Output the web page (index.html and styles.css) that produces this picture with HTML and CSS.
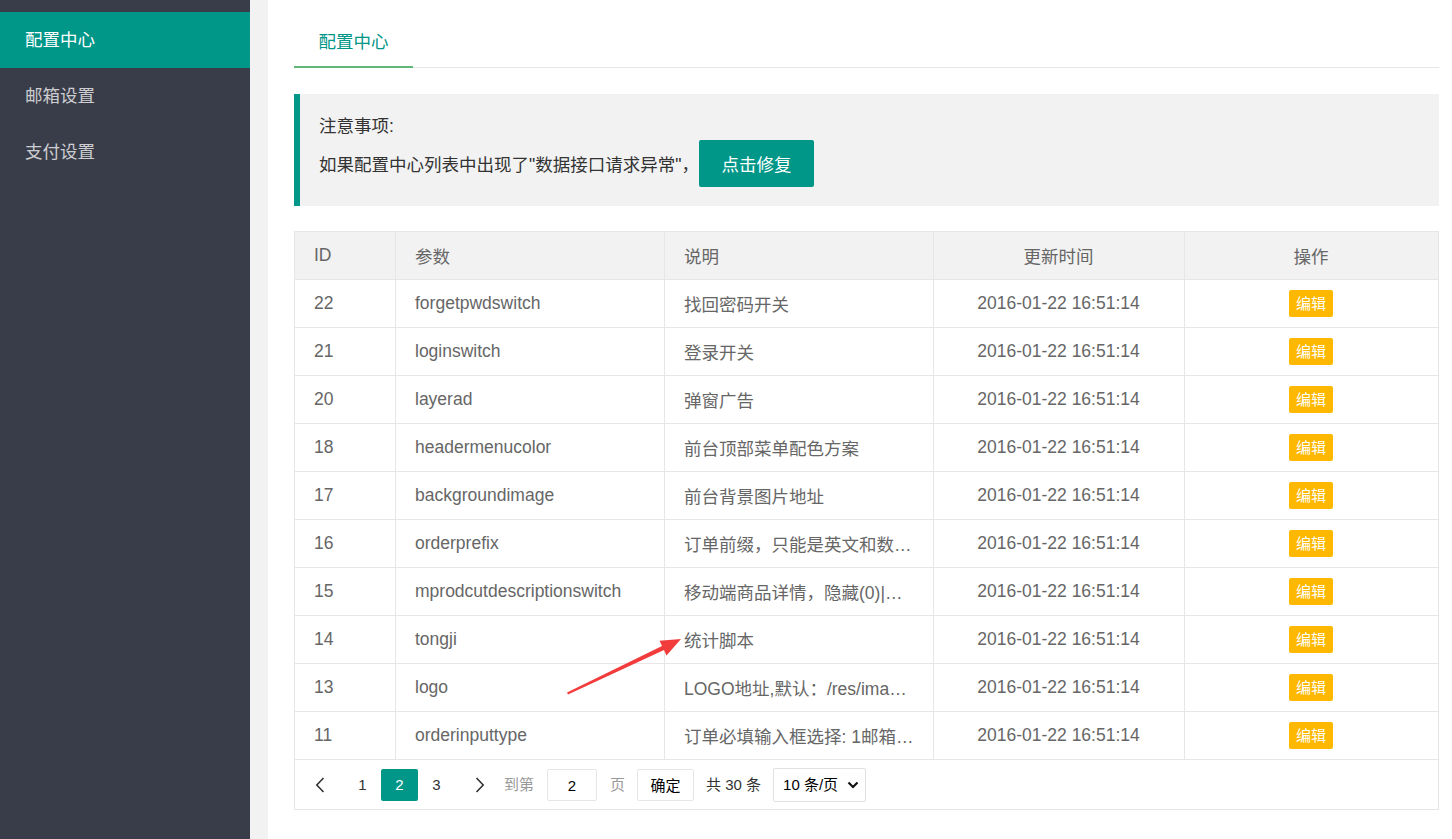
FILE: index.html
```html
<!DOCTYPE html>
<html lang="zh-CN">
<head>
<meta charset="utf-8">
<title>配置中心</title>
<link rel="stylesheet" href="styles.css">
</head>
<body>
<div class="layout">
  <aside class="side">
    <ul class="nav">
      <li class="nav-item active">配置中心</li>
      <li class="nav-item">邮箱设置</li>
      <li class="nav-item">支付设置</li>
    </ul>
  </aside>
  <main class="main">
    <div class="tabs">
      <div class="tab active">配置中心</div>
    </div>
    <div class="notice">
      <div class="notice-title">注意事项:</div>
      <div class="notice-line">
        <span>如果配置中心列表中出现了"数据接口请求异常"，</span>
        <button class="btn">点击修复</button>
      </div>
    </div>
    <table class="grid">
      <colgroup>
        <col class="c-id"><col class="c-key"><col class="c-desc"><col class="c-time"><col class="c-op">
      </colgroup>
      <thead>
        <tr><th>ID</th><th>参数</th><th>说明</th><th class="center">更新时间</th><th class="center">操作</th></tr>
      </thead>
      <tbody>
        <tr><td>22</td><td>forgetpwdswitch</td><td>找回密码开关</td><td class="center">2016-01-22 16:51:14</td><td class="center"><span class="btn-edit">编辑</span></td></tr>
        <tr><td>21</td><td>loginswitch</td><td>登录开关</td><td class="center">2016-01-22 16:51:14</td><td class="center"><span class="btn-edit">编辑</span></td></tr>
        <tr><td>20</td><td>layerad</td><td>弹窗广告</td><td class="center">2016-01-22 16:51:14</td><td class="center"><span class="btn-edit">编辑</span></td></tr>
        <tr><td>18</td><td>headermenucolor</td><td>前台顶部菜单配色方案</td><td class="center">2016-01-22 16:51:14</td><td class="center"><span class="btn-edit">编辑</span></td></tr>
        <tr><td>17</td><td>backgroundimage</td><td>前台背景图片地址</td><td class="center">2016-01-22 16:51:14</td><td class="center"><span class="btn-edit">编辑</span></td></tr>
        <tr><td>16</td><td>orderprefix</td><td>订单前缀，只能是英文和数…</td><td class="center">2016-01-22 16:51:14</td><td class="center"><span class="btn-edit">编辑</span></td></tr>
        <tr><td>15</td><td>mprodcutdescriptionswitch</td><td>移动端商品详情，隐藏(0)|…</td><td class="center">2016-01-22 16:51:14</td><td class="center"><span class="btn-edit">编辑</span></td></tr>
        <tr><td>14</td><td>tongji</td><td>统计脚本</td><td class="center">2016-01-22 16:51:14</td><td class="center"><span class="btn-edit">编辑</span></td></tr>
        <tr><td>13</td><td>logo</td><td>LOGO地址,默认：/res/ima…</td><td class="center">2016-01-22 16:51:14</td><td class="center"><span class="btn-edit">编辑</span></td></tr>
        <tr><td>11</td><td>orderinputtype</td><td>订单必填输入框选择: 1邮箱…</td><td class="center">2016-01-22 16:51:14</td><td class="center"><span class="btn-edit">编辑</span></td></tr>
      </tbody>
    </table>
    <div class="pager">
      <span class="pg-arrow prev"><svg width="10" height="16" viewBox="0 0 10 16"><path d="M8.5 1 L1.8 8 L8.5 15" fill="none" stroke="#333" stroke-width="1.6"/></svg></span>
      <span class="pg-num">1</span>
      <span class="pg-num current">2</span>
      <span class="pg-num">3</span>
      <span class="pg-arrow next"><svg width="10" height="16" viewBox="0 0 10 16"><path d="M1.5 1 L8.2 8 L1.5 15" fill="none" stroke="#333" stroke-width="1.6"/></svg></span>
      <span class="pg-muted skip-label">到第</span>
      <span class="pg-input">2</span>
      <span class="pg-muted">页</span>
      <span class="pg-btn">确定</span>
      <span class="pg-count">共 30 条</span>
      <span class="pg-select">10 条/页<svg width="12" height="8" viewBox="0 0 12 8"><path d="M1.5 1.5 L6 6 L10.5 1.5" fill="none" stroke="#111" stroke-width="2.2"/></svg></span>
    </div>
  </main>
</div>
<svg class="annot" width="130" height="70" viewBox="0 0 130 70">
  <polygon points="8,64.5 104,20 106.5,25.5 121,9 99.5,10.8 102,16 7,62.5" fill="#f23b3b"/>
</svg>
</body>
</html>
```
FILE: styles.css
```css
* { box-sizing: border-box; }
html, body { margin: 0; padding: 0; }
body {
  font-family: "Liberation Sans", "Noto Sans CJK SC", sans-serif;
  font-size: 17.5px;
  color: #333;
  background: #f2f2f2;
  height: 839px;
  overflow: hidden;
}
.layout { display: flex; height: 100%; }
.side {
  width: 250px;
  flex: none;
  background: #393d49;
  padding-top: 12px;
}
.nav { list-style: none; margin: 0; padding: 0; }
.nav-item {
  height: 56px;
  line-height: 56px;
  padding-left: 25px;
  color: rgba(255, 255, 255, 0.75);
}
.nav-item.active { background: #009688; color: #fff; }
.main {
  flex: 1;
  margin-left: 18px;
  background: #fff;
  padding: 18px 14px 0 26px;
}
.tabs {
  display: flex;
  height: 50px;
  border-bottom: 1px solid #e6e6e6;
}
.tab {
  padding: 0 24.5px;
  line-height: 49px;
  color: #009688;
  position: relative;
}
.tab.active { border-bottom: 2px solid #5fb878; margin-bottom: -1px; }
.notice {
  margin-top: 26px;
  background: #f2f2f2;
  border-left: 6px solid #009688;
  padding: 19px 19px 19px 19px;
}
.notice-title { line-height: 27px; }
.notice-line { display: flex; align-items: center; height: 47px; }
.btn {
  height: 47px;
  padding: 0 22.5px;
  border: none;
  border-radius: 2px;
  background: #009688;
  color: #fff;
  font: inherit;
  margin-left: 0;
}
.grid {
  margin-top: 25px;
  width: 100%;
  border-collapse: collapse;
  table-layout: fixed;
  color: #666;
}
.c-id { width: 101px; }
.c-key { width: 269px; }
.c-desc { width: 269px; }
.c-time { width: 251px; }
.c-op { width: 254px; }
.grid th, .grid td {
  border: 1px solid #e6e6e6;
  height: 48px;
  padding: 0 20px 0 19px;
  text-align: left;
  font-weight: normal;
  white-space: nowrap;
  overflow: hidden;
}
.grid th { background: #f2f2f2; }
.grid .center { text-align: center; }
.btn-edit {
  display: inline-block;
  height: 27px;
  line-height: 27px;
  padding: 0 6.5px;
  background: #ffb800;
  color: #fff;
  font-size: 15px;
  border-radius: 2px;
  vertical-align: middle;
}
.pager {
  height: 50px;
  border: 1px solid #e6e6e6;
  border-top: none;
  padding: 9px 8px 0;
  display: flex;
  align-items: flex-start;
  font-size: 15px;
  color: #333;
}
.pager > span { height: 32px; line-height: 32px; flex: none; }
.pg-arrow { width: 41px; display: flex; align-items: center; justify-content: center; }
.pg-arrow.prev { padding-right: 8px; }
.pg-arrow.next { padding-left: 8px; }
.pg-arrow svg { display: block; }
.pg-num { width: 37px; text-align: center; border-radius: 2px; }
.pg-num.current { background: #009688; color: #fff; }
.pg-muted { color: #999; }
.skip-label { margin-left: 8px; }
.pg-input {
  width: 50px;
  margin: 0 13px 0 13px;
  border: 1px solid #e6e6e6;
  border-radius: 2px;
  text-align: center;
  color: #000;
}
.pg-btn {
  width: 57px;
  margin-left: 12px;
  border: 1px solid #e6e6e6;
  border-radius: 2px;
  text-align: center;
  color: #000;
}
.pg-count { margin-left: 12px; color: #333; }
.pager > .pg-select {
  margin-left: 12px;
  margin-top: -1px;
  width: 93px;
  height: 34px;
  line-height: 32px;
  border: 1px solid #e1e1e1;
  border-radius: 2px;
  padding-left: 9px;
  color: #000;
  display: flex;
  align-items: center;
  gap: 9px;
}
.annot {
  position: absolute;
  left: 560px;
  top: 630px;
  pointer-events: none;
}
```
